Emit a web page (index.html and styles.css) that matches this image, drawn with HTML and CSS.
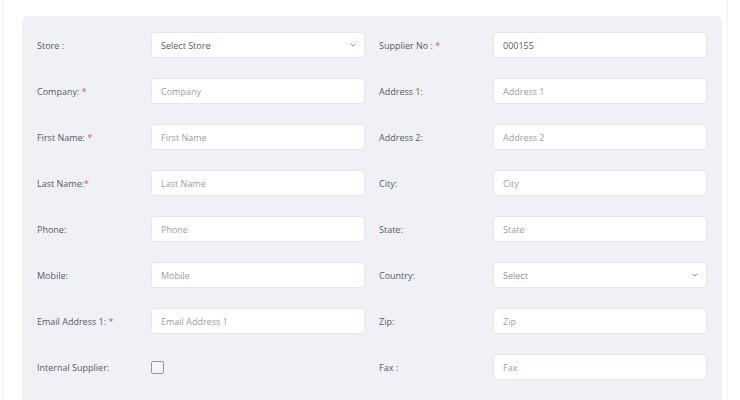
FILE: index.html
```html
<!DOCTYPE html>
<html>
<head>
<meta charset="utf-8">
<link rel="stylesheet" href="styles.css">
</head>
<body>
<div class="page">
  <form class="panel">
    <label class="lbl">Store :</label>
    <div class="field select"><span>Select Store</span><svg width="8" height="6" viewBox="0 0 8 6"><path d="M2 2 L4 4 L6 2" fill="none" stroke="#8a8d96" stroke-width="1"/></svg></div>
    <label class="lbl">Supplier No : <span class="req">*</span></label>
    <input class="field value" type="text" value="000155">

    <label class="lbl">Company: <span class="req">*</span></label>
    <input class="field" type="text" placeholder="Company">
    <label class="lbl">Address 1:</label>
    <input class="field" type="text" placeholder="Address 1">

    <label class="lbl">First Name: <span class="req">*</span></label>
    <input class="field" type="text" placeholder="First Name">
    <label class="lbl">Address 2:</label>
    <input class="field" type="text" placeholder="Address 2">

    <label class="lbl">Last Name:<span class="req">*</span></label>
    <input class="field" type="text" placeholder="Last Name">
    <label class="lbl">City:</label>
    <input class="field" type="text" placeholder="City">

    <label class="lbl">Phone:</label>
    <input class="field" type="text" placeholder="Phone">
    <label class="lbl">State:</label>
    <input class="field" type="text" placeholder="State">

    <label class="lbl">Mobile:</label>
    <input class="field" type="text" placeholder="Mobile">
    <label class="lbl">Country:</label>
    <div class="field select placeholder"><span>Select</span><svg width="8" height="6" viewBox="0 0 8 6"><path d="M2 2 L4 4 L6 2" fill="none" stroke="#8a8d96" stroke-width="1"/></svg></div>

    <label class="lbl">Email Address 1: <span class="req">*</span></label>
    <input class="field" type="text" placeholder="Email Address 1">
    <label class="lbl">Zip:</label>
    <input class="field" type="text" placeholder="Zip">

    <label class="lbl">Internal Supplier:</label>
    <div class="checkcell"><span class="checkbox"></span></div>
    <label class="lbl">Fax :</label>
    <input class="field" type="text" placeholder="Fax">
  </form>
</div>
</body>
</html>
```

FILE: styles.css
```css
* { box-sizing: border-box; }
html, body { margin: 0; padding: 0; background: #ffffff; }
body {
  font-family: "Open Sans", "Noto Sans", sans-serif;
  font-size: 9px;
  color: #555a63;
  height: 400px;
  overflow: hidden;
}
.page {
  margin-left: 2px;
  width: 726px;
  height: 400px;
  border-left: 1px solid #f0f1f4;
  border-right: 1px solid #f0f1f4;
  padding: 16px 5px 0 19px;
}
.panel {
  margin: 0;
  background: #f0f1f7;
  border-radius: 6px 6px 0 0;
  height: 400px;
  padding: 16px 14px 0 15px;
  display: grid;
  grid-template-columns: 100px 214px 100px 214px;
  column-gap: 14px;
  row-gap: 20px;
  grid-auto-rows: 26px;
  align-content: start;
}
.lbl {
  display: flex;
  align-items: center;
  font-size: 9px;
  color: #575b63;
  white-space: pre;
}
.req { color: #e3506a; }
.field {
  height: 26px;
  width: 214px;
  border: 1px solid #e5e7ee;
  border-radius: 4px;
  background: #ffffff;
  padding: 0 9px;
  font-family: "Open Sans", "Noto Sans", sans-serif;
  font-size: 9px;
  color: #555a63;
  outline: none;
  margin: 0;
}
.field::placeholder { color: #9b9ea7; opacity: 1; }
.value { color: #5a5e66; }
.select {
  display: flex;
  align-items: center;
  justify-content: space-between;
  padding: 0 7px 0 9px;
}
.select.placeholder { color: #8e929b; }
.select svg { display: block; }
.checkcell { display: flex; align-items: center; }
.checkbox {
  width: 13px;
  height: 13px;
  border: 1px solid #9196aa;
  border-radius: 2px;
  background: #f5f6fa;
}
```
